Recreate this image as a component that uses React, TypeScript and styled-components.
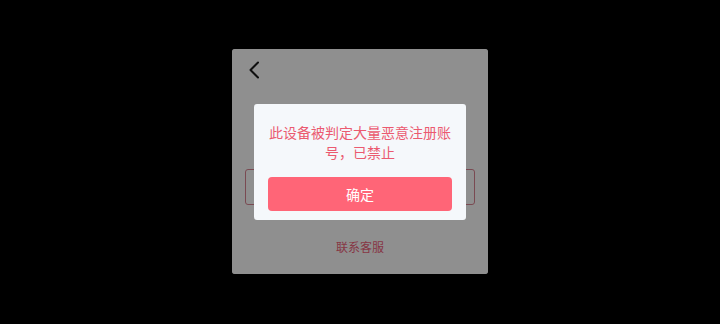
import React from "react";
import styled, { createGlobalStyle } from "styled-components";

const GlobalStyle = createGlobalStyle`
  html, body {
    margin: 0;
    padding: 0;
    background: #000;
    width: 720px;
    height: 324px;
    overflow: hidden;
  }
  * { box-sizing: border-box; }
  body {
    font-family: "Noto Sans CJK SC", "Noto Sans", sans-serif;
  }
`;

const Stage = styled.div`
  width: 720px;
  height: 324px;
  padding-top: 49px;
  display: flex;
  align-items: flex-start;
  justify-content: center;
`;

const Screen = styled.div`
  position: relative;
  width: 256px;
  height: 225px;
  background: #ffffff;
  border-radius: 3px;
  overflow: hidden;
  display: flex;
  flex-direction: column;
  align-items: center;
`;

const Header = styled.div`
  align-self: stretch;
  height: 32px;
  padding: 12px 0 0 16px;
  display: flex;
  align-items: flex-start;
`;

const Title = styled.div`
  margin-top: 22px;
  font-size: 16px;
  line-height: 18px;
  color: #333;
  letter-spacing: 1px;
`;

const InputBox = styled.div`
  margin-top: 48px;
  width: 230px;
  height: 36px;
  border: 1px solid #da8492;
  border-radius: 3px;
`;

const Contact = styled.div`
  margin-top: 34px;
  font-size: 12px;
  line-height: 16px;
  color: #f0627a;
`;

const Overlay = styled.div`
  position: absolute;
  inset: 0;
  background: rgba(0, 0, 0, 0.44);
  display: flex;
  align-items: center;
  justify-content: center;
`;

const Dialog = styled.div`
  width: 212px;
  background: #f5f8fb;
  border-radius: 3px;
  padding: 18px 14px 9px;
  display: flex;
  flex-direction: column;
  align-items: stretch;
`;

const Message = styled.div`
  font-size: 14px;
  line-height: 20px;
  color: #eb5a70;
  text-align: center;
`;

const Confirm = styled.button`
  margin-top: 15px;
  height: 34px;
  border: none;
  border-radius: 4px;
  background: #ff6577;
  color: #ffffff;
  font-family: "Noto Sans CJK SC", "Noto Sans", sans-serif;
  font-size: 14px;
  padding: 0;
`;

const BackIcon = () => (
  <svg width="12" height="18" viewBox="0 0 12 18">
    <polyline
      points="10,1.5 2.5,9 10,16.5"
      fill="none"
      stroke="#1e1e1e"
      strokeWidth="2"
      strokeLinecap="round"
      strokeLinejoin="round"
    />
  </svg>
);

export default function App() {
  return (
    <>
      <GlobalStyle />
      <Stage>
        <Screen>
          <Header>
            <BackIcon />
          </Header>
          <Title>手机号快捷登录注册</Title>
          <InputBox />
          <Contact>联系客服</Contact>
          <Overlay>
            <Dialog>
              <Message>此设备被判定大量恶意注册账号，已禁止</Message>
              <Confirm>确定</Confirm>
            </Dialog>
          </Overlay>
        </Screen>
      </Stage>
    </>
  );
}
